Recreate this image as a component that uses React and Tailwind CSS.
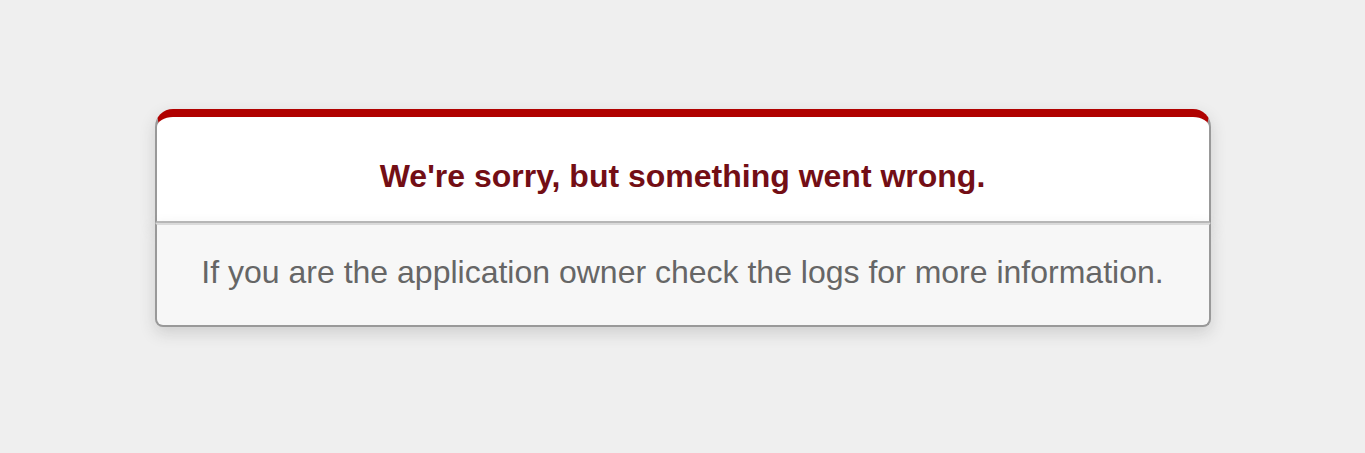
export default function App() {
  return (
    <div className="min-h-[453px] bg-[#efefef] text-center text-[#2e2f30] font-['Liberation_Sans',Arial,sans-serif] pt-[109px]">
      <div className="mx-auto w-[1056px]">
        <div className="rounded-t-[18px] border-t-[8px] border-x-2 border-b-2 border-t-[#b00100] border-x-[#999] border-b-[#bbb] bg-white px-[12%] pt-[14px] shadow-[0_6px_16px_rgba(50,50,50,0.17)]">
          <h1 className="my-[21px] text-[32px] font-bold leading-[48px] text-[#730e15]">
            We're sorry, but something went wrong.
          </h1>
        </div>
        <p className="mb-8 rounded-b-[8px] border-2 border-[#999] border-t-[#dadada] bg-[#f7f7f7] px-8 pt-[31px] pb-[37px] text-[32px] leading-[32px] text-[#666] shadow-[0_6px_16px_rgba(50,50,50,0.17)]">
          If you are the application owner check the logs for more information.
        </p>
      </div>
    </div>
  );
}
